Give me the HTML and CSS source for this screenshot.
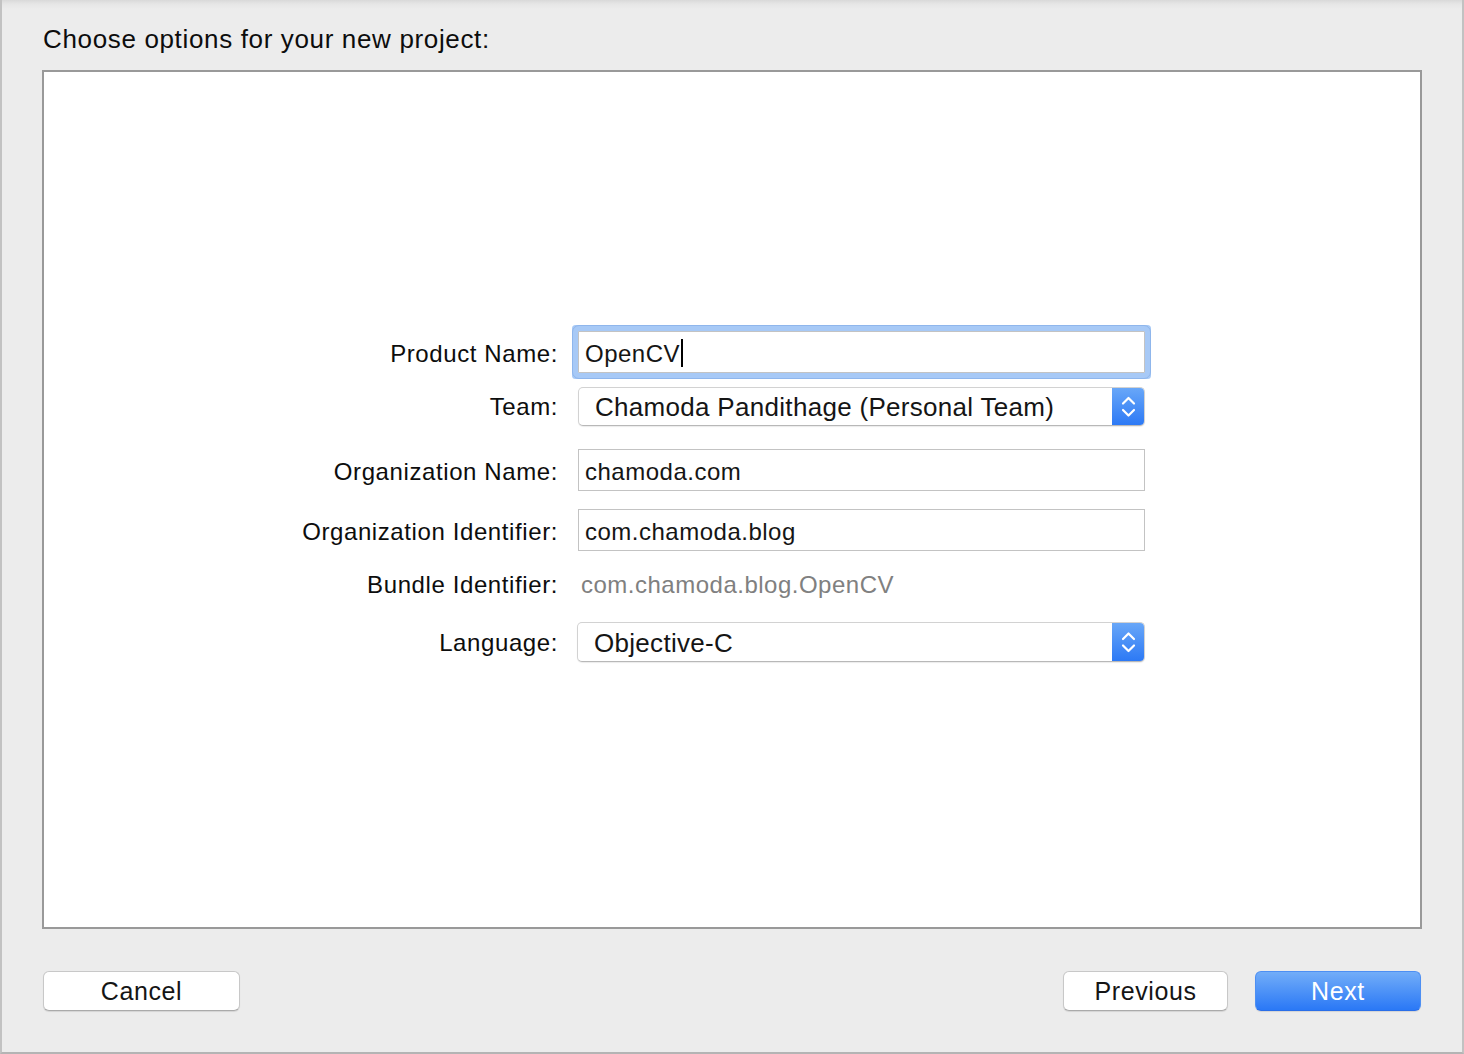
FILE: index.html
```html
<!DOCTYPE html>
<html>
<head>
<meta charset="utf-8">
<link rel="stylesheet" href="styles.css">
</head>
<body>
<div class="window">
  <h1 class="title">Choose options for your new project:</h1>
  <div class="panel">
    <div class="form">
      <div class="row row-product">
        <label class="label">Product Name:</label>
        <div class="field field-focus"><span class="value">OpenCV</span><span class="caret"></span></div>
      </div>
      <div class="row row-team">
        <label class="label">Team:</label>
        <div class="popup"><span class="popup-text">Chamoda Pandithage (Personal Team)</span>
          <span class="stepper"><svg width="33" height="39" viewBox="0 0 33 39"><path d="M11 16.5 L16.5 11 L22 16.5" fill="none" stroke="#fff" stroke-width="2.2" stroke-linecap="round" stroke-linejoin="round"/><path d="M11 23 L16.5 28.5 L22 23" fill="none" stroke="#fff" stroke-width="2.2" stroke-linecap="round" stroke-linejoin="round"/></svg></span>
        </div>
      </div>
      <div class="row row-org">
        <label class="label">Organization Name:</label>
        <div class="field"><span class="value">chamoda.com</span></div>
      </div>
      <div class="row row-orgid">
        <label class="label">Organization Identifier:</label>
        <div class="field"><span class="value">com.chamoda.blog</span></div>
      </div>
      <div class="row row-bundle">
        <label class="label">Bundle Identifier:</label>
        <div class="static">com.chamoda.blog.OpenCV</div>
      </div>
      <div class="row row-lang">
        <label class="label">Language:</label>
        <div class="popup popup-lang"><span class="popup-text">Objective-C</span>
          <span class="stepper"><svg width="33" height="40" viewBox="0 0 33 40"><path d="M11 17 L16.5 11.5 L22 17" fill="none" stroke="#fff" stroke-width="2.2" stroke-linecap="round" stroke-linejoin="round"/><path d="M11 23.5 L16.5 29 L22 23.5" fill="none" stroke="#fff" stroke-width="2.2" stroke-linecap="round" stroke-linejoin="round"/></svg></span>
        </div>
      </div>
    </div>
  </div>
  <div class="actions">
    <button class="btn btn-cancel">Cancel</button>
    <div class="spacer"></div>
    <button class="btn btn-prev">Previous</button>
    <button class="btn btn-primary">Next</button>
  </div>
</div>
</body>
</html>
```

FILE: styles.css
```css
* { box-sizing: border-box; }
html, body { margin: 0; padding: 0; background: #ececec; }
body {
  font-family: "Liberation Sans", Arial, sans-serif;
  color: #111;
}
.window {
  width: 1464px;
  height: 1054px;
  background: linear-gradient(#d9d9d9 0, #e6e6e6 4px, #ececec 9px, #ececec 100%);
  border-left: 2px solid #c2c2c2;
  border-right: 2px solid #c2c2c2;
  border-bottom: 2px solid #b4b4b4;
  padding-top: 24px;
}
.title {
  margin: 0 0 16px 41px;
  font-size: 26px;
  line-height: 30px;
  font-weight: normal;
  letter-spacing: 0.65px;
  color: #0d0d0d;
}
.panel {
  margin-left: 40px;
  width: 1380px;
  height: 859px;
  background: #fff;
  border: 2px solid #999;
  padding-top: 259px;
}
.form {
  display: flex;
  flex-direction: column;
}
.row {
  display: grid;
  grid-template-columns: 514px 567px;
  column-gap: 20px;
  align-items: center;
}
.label {
  text-align: right;
  font-size: 24px;
  letter-spacing: 0.6px;
  color: #0d0d0d;
  padding-top: 4px;
}
.row-bundle .label { padding-top: 0; }
.row-team .label, .row-lang .label { padding-top: 1px; }
.field {
  height: 42px;
  border: 1px solid #c3c3c3;
  background: #fff;
  display: flex;
  align-items: center;
  padding-left: 6px;
  padding-top: 4px;
  font-size: 24px;
  letter-spacing: 0.5px;
  color: #151515;
}
.field-focus {
  box-shadow: 0 0 0 6px #a7c9f6;
  border-radius: 1px;
  outline: 1px solid #8fb6ec;
  outline-offset: 5px;
}
.caret {
  display: inline-block;
  width: 2px;
  height: 28px;
  background: #000;
  margin-left: 1px;
  margin-top: -3px;
}
.row-team { margin-top: 14px; }
.row-org { margin-top: 23px; }
.row-orgid { margin-top: 18px; }
.row-bundle { margin-top: 19px; height: 30px; }
.row-lang { margin-top: 22px; }
.popup {
  height: 39px;
  background: #fff;
  border-radius: 5px;
  border: 1px solid #d2d2d2;
  border-bottom-color: #b8b8b8;
  box-shadow: 0 1px 1px rgba(0,0,0,0.08);
  display: flex;
  align-items: center;
  padding-left: 16px;
  font-size: 26px;
  letter-spacing: 0.3px;
  color: #151515;
  overflow: hidden;
}
.popup-text { flex: 1; padding-top: 2px; }
.popup-lang {
  height: 40px;
  margin-left: -1px;
  width: 568px;
}
.stepper {
  width: 33px;
  align-self: stretch;
  margin: -1px -1px -1px 0;
  background: linear-gradient(#6aa8f8, #2b78f5);
  border-radius: 0 5px 5px 0;
  display: flex;
  align-items: center;
  justify-content: center;
}
.stepper svg { display: block; }
.static {
  font-size: 24px;
  letter-spacing: 0.5px;
  color: #808080;
  padding-left: 3px;
}
.actions {
  display: flex;
  align-items: center;
  margin: 42px 0 0 41px;
  width: 1378px;
}
.spacer { flex: 1; }
.btn {
  font-family: "Liberation Sans", Arial, sans-serif;
  font-size: 25px;
  letter-spacing: 0.6px;
  height: 40px;
  padding: 0;
  background: #fff;
  color: #151515;
  border: 1px solid #c8c8c8;
  border-bottom-color: #aaa;
  border-radius: 6px;
  box-shadow: 0 1px 1px rgba(0,0,0,0.1);
}
.btn-cancel { width: 197px; }
.btn-prev { width: 165px; }
.btn-primary {
  width: 166px;
  margin-left: 27px;
  color: #fff;
  background: linear-gradient(#72adf8, #2a78f6);
  border: 1px solid #4d8ff3;
  border-bottom-color: #2a6ee8;
}
```
